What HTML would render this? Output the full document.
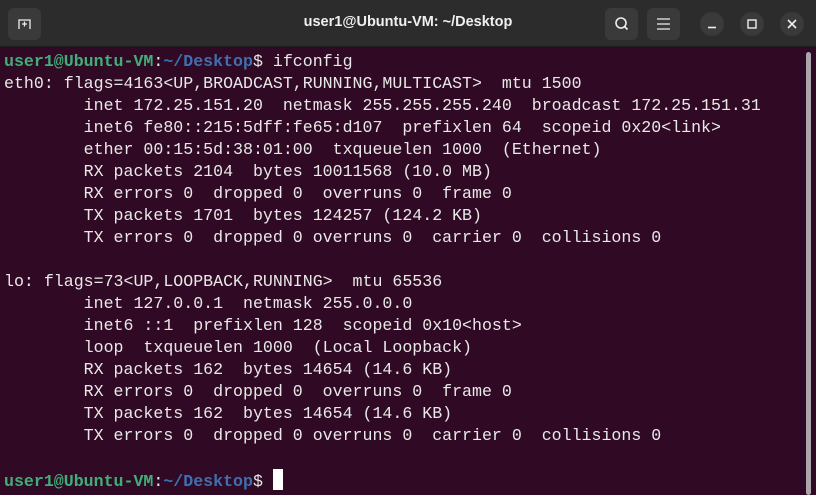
<!DOCTYPE html>
<html><head><meta charset="utf-8"><style>
*{margin:0;padding:0;box-sizing:border-box}
body{width:816px;height:495px;background:#300a24;overflow:hidden;position:relative;font-family:"Liberation Sans",sans-serif}
.hdr{position:absolute;left:0;top:0;width:816px;height:47px;background:#2c2c2c;border-bottom:1px solid #1d1d1d}
.title{position:absolute;left:0;right:0;top:14px;text-align:center;color:#f0f0f0;font-weight:bold;font-size:14.5px}
.btn{position:absolute;top:8px;width:33px;height:32px;background:#3a3a3a;border-radius:6px}
.cb{position:absolute;top:12px;width:24px;height:24px;background:#3a3a3a;border-radius:50%}
.term{position:absolute;left:4px;top:51px;font-family:"Liberation Mono",monospace;font-size:16.6px;line-height:22px;color:#e8e8e8;white-space:pre}
.g{color:#3fae77;font-weight:bold}.b{color:#3f6fb0;font-weight:bold}
.cur{display:inline-block;width:10px;height:21px;background:#fff;vertical-align:-4px}
.sb{position:absolute;left:806px;top:52px;width:5px;height:443px;background:#aaa6aa;border-radius:3px}
</style></head><body>
<div class="hdr">
<div class="btn" style="left:8px"><svg width="33" height="32"><path d="M11 21V12h11v9M16.5 13.5v5M14 16h5" stroke="#eee" stroke-width="1.3" fill="none"/></svg></div>
<div class="title">user1@Ubuntu-VM: ~/Desktop</div>
<div class="btn" style="left:605px"><svg width="33" height="32"><circle cx="16" cy="15" r="5" stroke="#eee" stroke-width="1.6" fill="none"/><path d="M19.5 18.5l3 3" stroke="#eee" stroke-width="1.6"/></svg></div>
<div class="btn" style="left:647px"><svg width="33" height="32"><path d="M10 11h13M10 16h13M10 21h13" stroke="#eee" stroke-width="1.3"/></svg></div>
<div class="cb" style="left:700px"><svg width="24" height="24"><path d="M8 15.5h8" stroke="#eee" stroke-width="1.6"/></svg></div>
<div class="cb" style="left:740px"><svg width="24" height="24"><rect x="8" y="8" width="8" height="8" stroke="#eee" stroke-width="1.4" fill="none"/></svg></div>
<div class="cb" style="left:780px"><svg width="24" height="24"><path d="M8 8l8 8M16 8l-8 8" stroke="#eee" stroke-width="1.6"/></svg></div>
</div>
<div class="term"><span class="g">user1@Ubuntu-VM</span>:<span class="b">~/Desktop</span>$ ifconfig
eth0: flags=4163&lt;UP,BROADCAST,RUNNING,MULTICAST&gt;  mtu 1500
        inet 172.25.151.20  netmask 255.255.255.240  broadcast 172.25.151.31
        inet6 fe80::215:5dff:fe65:d107  prefixlen 64  scopeid 0x20&lt;link&gt;
        ether 00:15:5d:38:01:00  txqueuelen 1000  (Ethernet)
        RX packets 2104  bytes 10011568 (10.0 MB)
        RX errors 0  dropped 0  overruns 0  frame 0
        TX packets 1701  bytes 124257 (124.2 KB)
        TX errors 0  dropped 0 overruns 0  carrier 0  collisions 0

lo: flags=73&lt;UP,LOOPBACK,RUNNING&gt;  mtu 65536
        inet 127.0.0.1  netmask 255.0.0.0
        inet6 ::1  prefixlen 128  scopeid 0x10&lt;host&gt;
        loop  txqueuelen 1000  (Local Loopback)
        RX packets 162  bytes 14654 (14.6 KB)
        RX errors 0  dropped 0  overruns 0  frame 0
        TX packets 162  bytes 14654 (14.6 KB)
        TX errors 0  dropped 0 overruns 0  carrier 0  collisions 0

<span class="g">user1@Ubuntu-VM</span>:<span class="b">~/Desktop</span>$ <span class="cur"></span></div>
<div class="sb"></div>
</body></html>
